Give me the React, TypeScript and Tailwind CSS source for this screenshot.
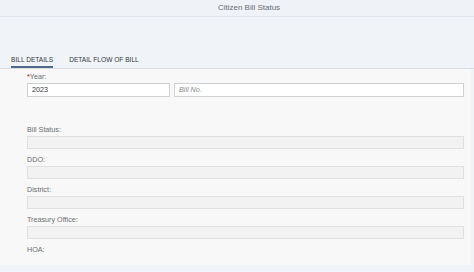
const FIELDS = ['Bill Status:', 'DDO:', 'District:', 'Treasury Office:'];

const TABS = [
  { id: 'details', label: 'BILL DETAILS', active: true },
  { id: 'flow', label: 'DETAIL FLOW OF BILL', active: false },
];

export default function App() {
  return (
    <div
      className="w-[474px] h-[272px] overflow-hidden bg-[#f0f4f8] text-[#32363a]"
      style={{ fontFamily: '"Liberation Sans", Arial, sans-serif' }}
    >
      <header className="h-[17px] flex items-center justify-center pl-[24px] border-b border-[#e1e6ec] bg-[#eff3f8]">
        <h1 className="text-[8px] leading-none text-[#6a6d70]">Citizen Bill Status</h1>
      </header>

      <div className="h-[38px]" />

      <nav className="h-[14px] flex items-end gap-[16px] px-[11px] border-b border-[#d9dde2]">
        {TABS.map((tab) => (
          <div
            key={tab.id}
            className={`
              h-[13px] text-[6.6px] leading-none pt-[2px] text-[#32363a]
              ${tab.active ? 'border-b-2 border-[#4f6a86]' : ''}
            `}
          >
            {tab.label}
          </div>
        ))}
      </nav>

      <main className="w-[471px] h-[196px] bg-[#f8f8f8] pl-[27px] pr-[7px] pt-[3px] flex flex-col">
        <label className="text-[7.2px] leading-[10px] text-[#6a6d70]">
          <span className="text-[#bb0000]">*</span>Year:
        </label>
        <div className="flex gap-[4px] mt-[1px]">
          <div className="w-[143px] h-[14px] shrink-0 bg-white border border-[#cfd2d4] flex items-center px-[4px] text-[7.2px] text-[#32363a]">
            2023
          </div>
          <div className="flex-1 h-[14px] bg-white border border-[#cfd2d4] flex items-center px-[4px] text-[7.2px] italic text-[#8a8d90]">
            Bill No.
          </div>
        </div>

        <div className="h-[28px]" />

        {FIELDS.map((label) => (
          <div key={label} className="flex flex-col mb-[6px]">
            <span className="text-[7.2px] leading-[10px] text-[#6a6d70]">{label}</span>
            <div className="h-[13px] mt-[1px] bg-[#f2f2f2] border border-[#e0e0e0]" />
          </div>
        ))}
        <span className="text-[7.2px] leading-[10px] text-[#6a6d70]">HOA:</span>
      </main>
    </div>
  );
}
